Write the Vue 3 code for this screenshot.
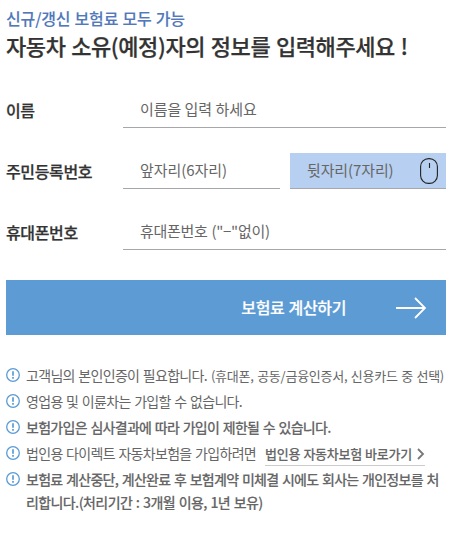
<script setup>
const notices = [
  { text: '고객님의 본인인증이 필요합니다.', small: '(휴대폰, 공동/금융인증서, 신용카드 중 선택)' },
  { text: '영업용 및 이륜차는 가입할 수 없습니다.' },
  { text: '보험가입은 심사결과에 따라 가입이 제한될 수 있습니다.', strong: true },
  { text: '법인용 다이렉트 자동차보험을 가입하려면', link: '법인용 자동차보험 바로가기' },
  { text: '보험료 계산중단, 계산완료 후 보험계약 미체결 시에도 회사는 개인정보를 처', rest: '리합니다.(처리기간 : 3개월 이용, 1년 보유)', strong: true },
]
</script>

<template>
  <main class="page">
    <p class="eyebrow">신규/갱신 보험료 모두 가능</p>
    <h1>자동차 소유(예정)자의 정보를 입력해주세요 !</h1>
    <form class="form" @submit.prevent>
      <div class="row">
        <label>이름</label>
        <div class="field">이름을 입력 하세요</div>
      </div>
      <div class="row">
        <label>주민등록번호</label>
        <div class="field">앞자리(6자리)</div>
        <div class="field secure">
          <span>뒷자리(7자리)</span>
          <svg width="18" height="26" viewBox="0 0 18 26" fill="none" stroke="#222" stroke-width="1.1">
            <rect x=".6" y=".6" width="16.8" height="24.8" rx="8" />
            <path d="M9.5 5v5" />
          </svg>
        </div>
      </div>
      <div class="row">
        <label>휴대폰번호</label>
        <div class="field phone">휴대폰번호 ("−"없이)</div>
      </div>
      <button class="submit">
        <span>보험료 계산하기</span>
        <svg width="30" height="22" viewBox="0 0 30 22" fill="none" stroke="#fff" stroke-width="1.8">
          <path d="M0 11h29M19 1l10 10-10 10" />
        </svg>
      </button>
    </form>
    <ul class="notices">
      <li v-for="n in notices" :key="n.text" :class="{ strong: n.strong }">
        <svg class="info" width="14" height="14" viewBox="0 0 14 14" fill="none" stroke="#5b9bd5">
          <circle cx="7" cy="7" r="6.3" stroke-width="1.3" />
          <path d="M7 3.2v4.6M7 9v1.8" stroke-width="1.7" />
        </svg>
        <div class="body">
          <div class="line">
            <span>{{ n.text }}</span>
            <span v-if="n.small" class="small">{{ n.small }}</span>
            <a v-if="n.link" class="link">
              <span>{{ n.link }}</span>
              <svg width="8" height="12" viewBox="0 0 8 12" fill="none" stroke="#777" stroke-width="1.8">
                <path d="M1 1l5 5-5 5" />
              </svg>
            </a>
          </div>
          <div v-if="n.rest" class="rest">{{ n.rest }}</div>
        </div>
      </li>
    </ul>
  </main>
</template>

<style>
body { margin: 0; background: #fff; }
</style>

<style scoped>
.page {
  box-sizing: border-box;
  width: 456px;
  height: 540px;
  padding: 6px 10px 0 6px;
  overflow: hidden;
  font-family: "Noto Sans CJK KR", sans-serif;
  color: #333;
  white-space: nowrap;
}
.eyebrow {
  margin: 0;
  font-size: 16px;
  line-height: 24px;
  font-weight: 500;
  letter-spacing: -0.15px;
  word-spacing: 0.7px;
  color: #5078bb;
  -webkit-text-stroke: 0.1px;
}
h1 {
  margin: 0;
  font-size: 22px;
  line-height: 31px;
  font-weight: 500;
  letter-spacing: -0.4px;
  word-spacing: 1.1px;
  -webkit-text-stroke: 0.25px;
}
.form { padding-top: 31px; }
.row { display: flex; height: 36px; margin-bottom: 25px; }
label {
  width: 117px;
  font-size: 16px;
  line-height: 36px;
  font-weight: 500;
  letter-spacing: -0.35px;
  -webkit-text-stroke: 0.25px;
}
.field {
  box-sizing: border-box;
  flex: 1;
  padding-left: 17px;
  border-bottom: 1px solid #a5a7aa;
  font-size: 15px;
  line-height: 34px;
  letter-spacing: -0.04px;
  color: #666;
}
.phone { letter-spacing: -0.28px; word-spacing: 0.7px; }
.secure {
  display: flex;
  flex: 0 0 156px;
  align-items: center;
  justify-content: space-between;
  margin-left: 10px;
  padding-right: 8px;
  background: #b7cff0;
}
.secure span { padding-bottom: 2px; letter-spacing: -0.12px; }
.submit {
  display: flex;
  align-items: center;
  justify-content: flex-end;
  gap: 50px;
  width: 100%;
  height: 55px;
  margin: 30px 0 0;
  padding: 0 20px 0 0;
  border: 0;
  background: #5d9bd4;
  color: #fff;
  font: 500 16px/24px "Noto Sans CJK KR", sans-serif;
  letter-spacing: -0.35px;
  word-spacing: 0.8px;
  -webkit-text-stroke: 0.2px;
}
.submit span { padding-bottom: 2px; }
.notices {
  display: grid;
  gap: 3px;
  margin: 29px 0 0;
  padding: 0;
  list-style: none;
  font-size: 14px;
  line-height: 23px;
  letter-spacing: -0.69px;
  word-spacing: 1.1px;
  color: #666;
}
li { display: flex; gap: 6px; }
.info { flex: none; margin-top: 4px; }
.line { display: flex; height: 23px; }
.strong { font-weight: 500; letter-spacing: -0.71px; -webkit-text-stroke: 0.1px; }
.small { margin-left: 4px; font-size: 13px; letter-spacing: -0.24px; word-spacing: 0.8px; }
.rest { letter-spacing: -0.6px; }
.link {
  display: flex;
  box-sizing: border-box;
  align-items: center;
  gap: 5px;
  height: 24px;
  margin-left: 9px;
  border-bottom: 1px solid #ccc;
  font-size: 13px;
  font-weight: 500;
  letter-spacing: -0.27px;
  word-spacing: 0.6px;
  -webkit-text-stroke: 0.1px;
}
</style>
